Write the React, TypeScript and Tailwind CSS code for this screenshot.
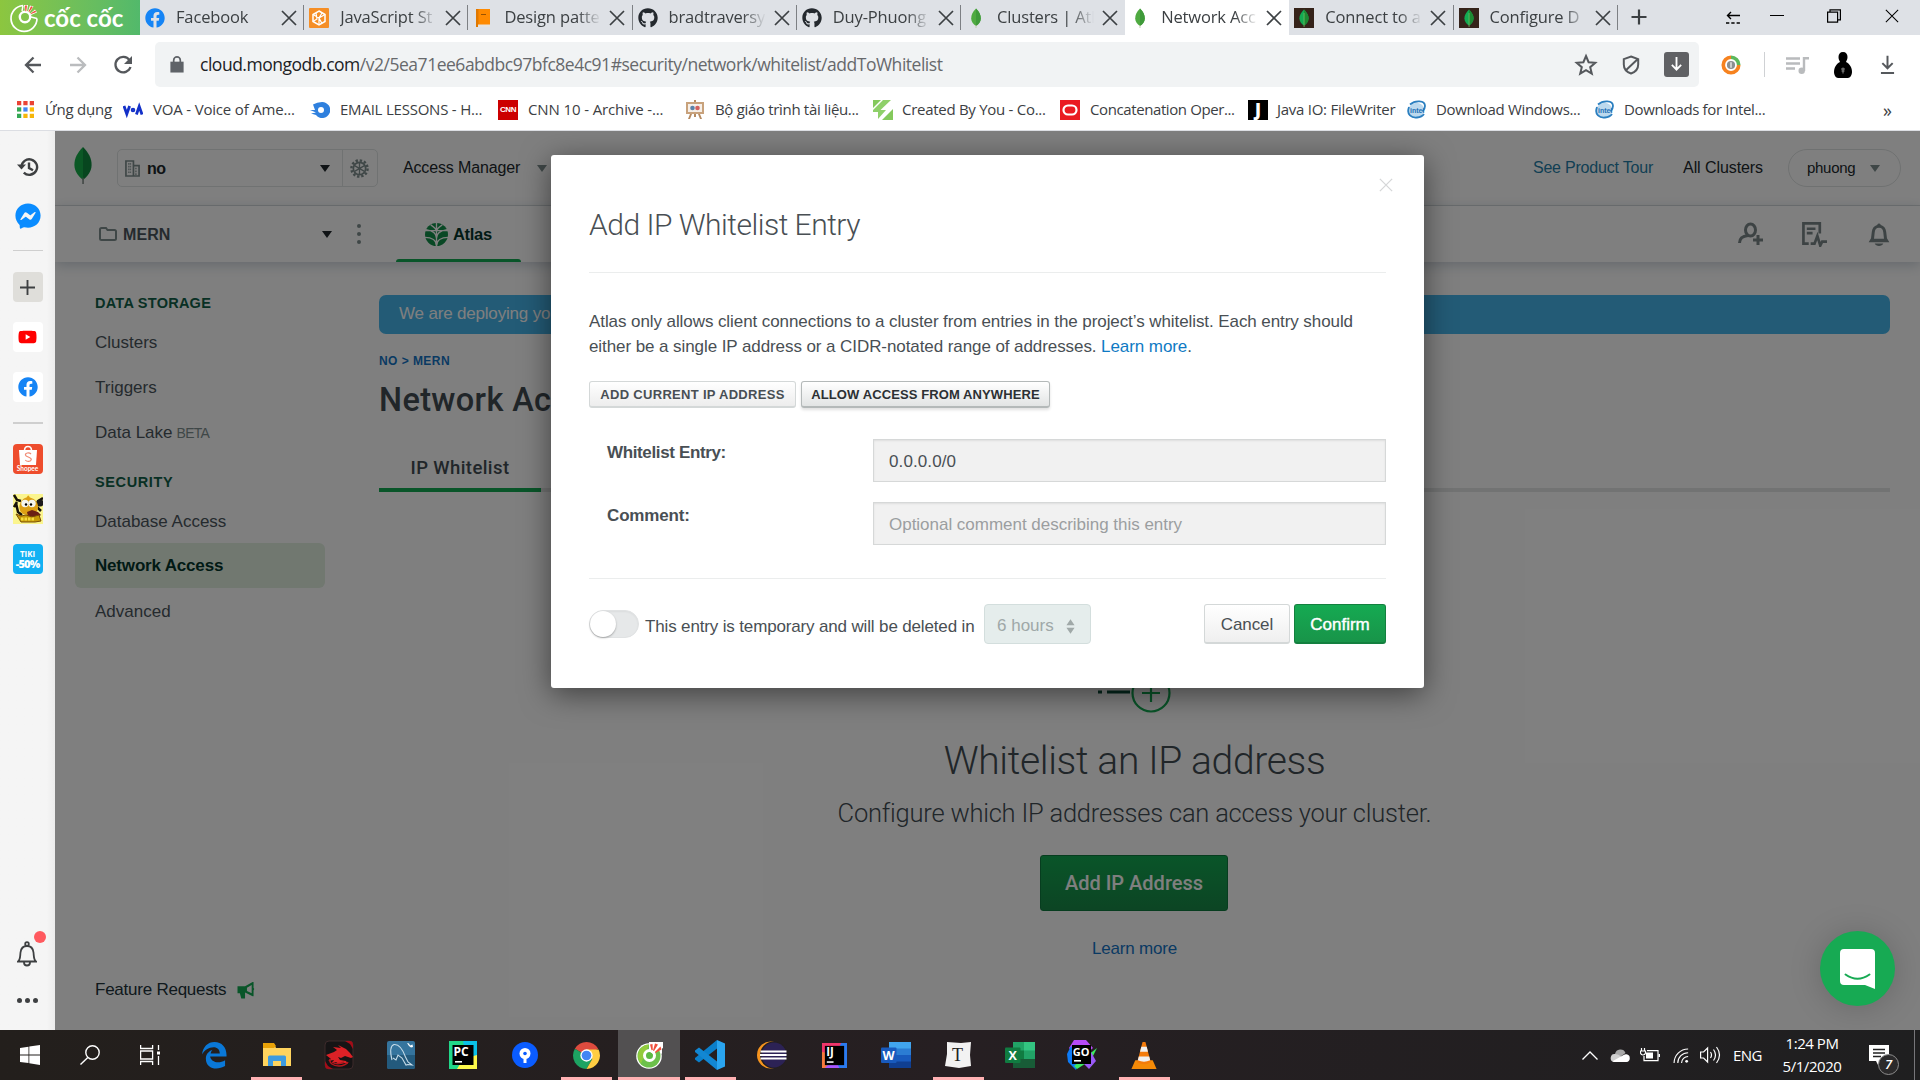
import React from "react";
import { FaGithub, FaFacebook, FaFacebookMessenger, FaYoutube } from "react-icons/fa";

type Kids = { children?: React.ReactNode };

/* ---------- small brand marks ---------- */

const Leaf = ({ className }: { className: string }) => (
  <svg viewBox="0 0 20 36" className={className} preserveAspectRatio="none">
    <path d="M10 0C4 6 1.400 11 1.400 17.500c0 6 4 11 8.600 14.500z" fill="#16b04a" />
    <path d="M10 0c6 6 8.600 11 8.600 17.500 0 6-4 11-8.600 14.500z" fill="#0f8d3f" />
    <path d="M9.300 30h1.500v6H9.300z" fill="#7d8a83" />
  </svg>
);

const TabLeaf = () => (
  <svg viewBox="0 0 20 20" className="h-5 w-5">
    <path d="M10 .5C6.500 4 5.200 7 5.200 10.400c0 3.200 2 5.600 4.800 7.600 2.800-2 4.800-4.400 4.800-7.600C14.800 7 13.500 4 10 .5z" fill="#4faa41" />
    <path d="M10 .5c3.500 3.500 4.800 6.500 4.800 9.900 0 3.200-2 5.600-4.800 7.600z" fill="#3f9a3a" />
    <path d="M9.600 17h.8v3h-.8z" fill="#b8c4a2" />
  </svg>
);

const DarkLeaf = () => (
  <svg viewBox="0 0 20 20" className="h-5 w-5">
    <rect width="20" height="20" fill="#35231a" />
    <path d="M10 1.500C6.600 5 5.400 7.500 5.400 10.400c0 3 2 5.300 4.600 7.100 2.600-1.800 4.600-4.100 4.600-7.100C14.600 7.500 13.400 5 10 1.500z" fill="#13aa52" />
    <path d="M10 1.500c3.400 3.500 4.600 6 4.600 8.900 0 3-2 5.300-4.600 7.100z" fill="#1d8a33" />
    <path d="M9.700 5h.7v14h-.7z" fill="#7ac46a" />
  </svg>
);

const CocOutline = () => (
  <svg viewBox="0 0 30 30" className="h-[30px] w-[30px]" fill="none">
    <path d="M14 2.500A13 13 0 1 0 28 15.500" stroke="#fff" strokeWidth="1.700" />
    <path d="M14 2.500L13 8M28 15.500L22 14" stroke="#fff" strokeWidth="1.400" />
    <circle cx="16" cy="14" r="5.200" stroke="#fff" strokeWidth="2.400" />
    <path d="M15 2h4l-1 6.500-2-.2zM21 2.500l3.500 1-4 6-1.500-1zM26 6.500l2 3-6 2.500-.8-1.500z" fill="#fff" />
    <path d="M16 2.500h2l-.7 5.800h-1zM22 3.300l1.800.7-3.500 5-.8-.6zM26.300 7.500l.9 1.500-5 2-.4-.8z" fill="#f0503c" />
  </svg>
);

const CocColor = () => (
  <svg viewBox="0 0 28 28" className="h-[28px] w-[28px]" fill="none">
    <circle cx="14" cy="15" r="12.800" fill="#fff" />
    <path d="M14 3h13v10z" fill="#fff" />
    <circle cx="14" cy="15" r="11.500" fill="#6cc04a" />
    <path d="M14 3.500a11.500 11.500 0 0 0-8 19z" fill="#93cb3c" />
    <circle cx="14.500" cy="14.500" r="5" stroke="#fff" strokeWidth="3" fill="#5cb944" />
    <path d="M14 1h14v6l-10 6-4-3z" fill="#fff" />
    <path d="M15 3.500l2.500-.5.300 6-1.300.3zM20 2.500l3 1-4 6.500-1-.6zM25.500 5.500l1 3-6 3.500-.6-1z" fill="#f0503c" />
  </svg>
);

/* ---------- browser tabs ---------- */

const tabs: { title: string; icon: React.ReactNode; active?: boolean; sep?: boolean }[] = [
  { title: "Facebook", icon: <FaFacebook className="h-5 w-5 text-[#1584f5]" />, sep: true },
  {
    title: "JavaScript St",
    sep: true,
    icon: (
      <svg viewBox="0 0 20 20" className="h-5 w-5" fill="none">
        <rect width="20" height="20" rx="1" fill="#f58e26" />
        <path d="M10 3l6 3.500v7L10 17l-6-3.500v-7z" stroke="#fff" strokeWidth="1.500" />
        <path d="M4 6.500l6 3.500 3-5M16 6.500L10 10l3 5.500M4 13.500L8 11l-1-6M10 10v7" stroke="#fff" strokeWidth="1.200" />
      </svg>
    ),
  },
  {
    title: "Design patte",
    sep: true,
    icon: (
      <svg viewBox="0 0 20 20" className="h-5 w-5">
        <path d="M3 1h14v16H3z" fill="#ff8a00" />
        <path d="M3 1h2.500v18H3z" fill="#e07800" />
        <path d="M5 16.500h12v2.500H5z" fill="#e8e3dc" />
        <path d="M8 6h5v1H8z" fill="#9a5200" />
      </svg>
    ),
  },
  { title: "bradtraversy", icon: <FaGithub className="h-5 w-5 text-[#24292e]" />, sep: true },
  { title: "Duy-Phuong", icon: <FaGithub className="h-5 w-5 text-[#24292e]" />, sep: true },
  { title: "Clusters | Atl", icon: <TabLeaf /> },
  { title: "Network Acc", icon: <TabLeaf />, active: true },
  { title: "Connect to a", icon: <DarkLeaf />, sep: true },
  { title: "Configure D", icon: <DarkLeaf />, sep: true },
];

const Cross = ({ className }: { className: string }) => (
  <svg viewBox="0 0 16 16" className={className} stroke="currentColor" fill="none">
    <path d="M1 1l14 14M15 1L1 15" />
  </svg>
);

function TabStrip() {
  return (
    <div className="flex h-[35px] bg-[#dee1e6] text-[#3c4043]">
      <div className="flex w-[140px] items-center bg-gradient-to-r from-[#8cc63f] to-[#52b96b] pl-[9px]">
        <CocOutline />
        <span className="ml-[5px] font-['Lato',sans-serif] text-[24px] leading-[28px] font-bold whitespace-nowrap text-white">cốc cốc</span>
      </div>
      {tabs.map((t) => (
        <div
          key={t.title}
          className={
            "flex w-[164.2px] shrink-0 items-center pl-[5px] " + (t.active ? "bg-white" : "")
          }
        >
          <div className="flex w-5 shrink-0">{t.icon}</div>
          <div className="ml-[11px] w-[97px] overflow-hidden [mask-image:linear-gradient(to_right,black_76%,transparent)] text-[16.500px] tracking-[-0.15px] whitespace-nowrap">
            {t.title}
          </div>
          <Cross className="ml-[8px] h-[16px] w-[16px] shrink-0 stroke-[1.700]" />
          <div className={"ml-auto h-[25px] w-px " + (t.sep ? "bg-[#7d8084]" : "")} />
        </div>
      ))}
      <svg viewBox="0 0 16 16" className="mt-[9px] ml-[13px] h-4 w-4" stroke="#3c4043" strokeWidth="2.200"><path d="M8 .5v15M.5 8h15" /></svg>
      <div className="ml-auto flex items-start gap-0 pt-[9px] text-black">
        <svg viewBox="0 0 14 14" className="mt-[2px] mr-[30px] h-[14px] w-[14px]" fill="none" stroke="currentColor" strokeWidth="1.400"><path d="M14 4.500H2M5 1L1.500 4.500 5 8" /><path d="M0 12h14" strokeDasharray="3.300 2" /></svg>
        <svg viewBox="0 0 14 14" className="mr-[43px] h-[14px] w-[14px]" stroke="currentColor"><path d="M0 6.500h14" /></svg>
        <svg viewBox="0 0 14 14" className="mr-[44px] h-[14px] w-[14px]" fill="none" stroke="currentColor" strokeWidth="1.200"><path d="M.6 3.200h10v10H.6zM3 3V.8h10.400v10H11" /></svg>
        <Cross className="mr-[21px] h-[14px] w-[14px] stroke-[1.200]" />
      </div>
    </div>
  );
}

/* ---------- address bar ---------- */

function AddressBar() {
  return (
    <div className="flex h-[60px] items-center bg-white pb-[1px] text-[#5f6368]">
      <svg viewBox="0 0 20 20" className="ml-[23px] h-5 w-5" fill="none" stroke="#55585c" strokeWidth="2.300"><path d="M18 10H4M10.500 2.500L3 10l7.500 7.500" /></svg>
      <svg viewBox="0 0 20 20" className="ml-[25px] h-5 w-5" fill="none" stroke="#babcbe" strokeWidth="2.300"><path d="M2 10h14M9.500 2.500L17 10l-7.500 7.500" /></svg>
      <svg viewBox="0 0 20 20" className="ml-[25px] h-5 w-5" fill="none" stroke="#55585c" strokeWidth="2.300"><path d="M16.500 5.200A7.700 7.700 0 1 0 17.500 12" /><path d="M19 1v8h-8z" fill="#55585c" stroke="none" /></svg>
      <div className="ml-[22px] flex h-[45px] w-[1544px] items-center rounded-[5px] bg-[#f1f3f4] pr-[10px] pl-[15px]">
        <svg viewBox="0 0 14 18" className="h-[17px] w-[14px]"><path d="M0 6h14v11.500H0z" fill="#5f6368" /><path d="M3.500 7V4.500a3.500 3.500 0 0 1 7 0V7" fill="none" stroke="#5f6368" strokeWidth="1.800" /></svg>
        <div className="ml-[16px] text-[17.500px] tracking-[-0.48px] whitespace-nowrap text-[#67696c]">
          <span className="text-[#202124]">cloud.mongodb.com</span>/v2/5ea71ee6abdbc97bfc8e4c91#security/network/whitelist/addToWhitelist
        </div>
        <svg viewBox="0 0 24 24" className="ml-auto h-[24px] w-[24px]" fill="none" stroke="#55585c" strokeWidth="2"><path d="M12 3l2.600 6.200 6.700.6-5.100 4.400 1.600 6.500L12 17.200l-5.800 3.500 1.600-6.500-5.100-4.400 6.700-.6z" /></svg>
        <svg viewBox="0 0 20 22" className="ml-[24px] h-[20px] w-[18px]" fill="none" stroke="#55585c" strokeWidth="2.200"><path d="M10 1.500l8 3v6c0 5-3.500 8.500-8 10-4.500-1.500-8-5-8-10v-6zM17 5L4 17" /></svg>
        <div className="ml-[24px] flex h-[25px] w-[25px] items-center justify-center rounded-[3px] bg-[#606164]">
          <svg viewBox="0 0 14 16" className="h-[15px] w-[13px]" fill="none" stroke="#fff" strokeWidth="2"><path d="M7 0v13M2 8.500l5 5 5-5" /></svg>
        </div>
      </div>
      <svg viewBox="0 0 22 22" className="ml-[22px] h-[20px] w-[20px]" fill="none">
        <path d="M11 2.500A8.500 8.500 0 1 0 19.500 11" stroke="#f6821f" strokeWidth="4" />
        <path d="M11 2.500A8.500 8.500 0 0 1 19.500 11" stroke="#5cb85c" strokeWidth="4" />
        <circle cx="11" cy="11" r="4.500" fill="#8a8f91" /><path d="M11 8v6" stroke="#e7e7e7" strokeWidth="1.600" />
      </svg>
      <div className="ml-[23px] h-[25px] w-px bg-[#cfd1d4]" />
      <svg viewBox="0 0 24 20" className="ml-[21px] h-[20px] w-[24px]" fill="none" stroke="#b9bbbd" strokeWidth="2.400"><path d="M0 3.500h14M0 8.500h14M0 13.500h9" /><path d="M18 16V3.200h5" /><circle cx="15.700" cy="15.700" r="3.200" fill="#b9bbbd" stroke="none" /></svg>
      <svg viewBox="0 0 18 26" className="ml-[24px] h-[26px] w-[18px]"><path d="M9 0c3 0 4.500 2 4.500 5 0 2-.8 3.500-1.500 5 4 2 6 6 6 10 0 3-2 6-4 6H4c-2 0-4-3-4-6 0-4 2-8 6-10-.7-1.500-1.500-3-1.500-5C4.500 2 6 0 9 0z" fill="#000" /><path d="M7 17h4M9 15.500v6M7.500 19h3" stroke="#999" strokeWidth=".9" /></svg>
      <svg viewBox="0 0 16 20" className="ml-[28px] h-[20px] w-[15px]" fill="none" stroke="#55585c" strokeWidth="2.100"><path d="M8 0v13M2.500 8L8 13.500 13.500 8M1 18.500h14" /></svg>
    </div>
  );
}

/* ---------- bookmarks ---------- */

const IntelMark = () => (
  <svg viewBox="0 0 20 20" className="h-5 w-5" fill="none">
    <ellipse cx="9" cy="10.500" rx="8.500" ry="7.500" fill="#bcd9ee" transform="rotate(-25 9 10.500)" />
    <path d="M3 4.500C8 0 18 0 18 6c0 3-1 4-2.500 5.500M2 7c-3 8 3 11 8 10.500 3-.3 6-2 7-3.500" stroke="#2b7fc0" strokeWidth="1.800" />
    <text x="3" y="12.500" fontSize="7" fontWeight="700" fill="#1f70b5" fontFamily="Liberation Sans">intel</text>
  </svg>
);

const bookmarks: { label: string; width: string; text: string; icon: React.ReactNode }[] = [
  {
    label: "Ứng dụng", width: "w-[106px]", text: "pl-px tracking-[-0.2px]",
    icon: (
      <svg viewBox="0 0 18 18" className="h-[17px] w-[17px]">
        <path d="M0 0h4.500v4.500H0zM6.700 0h4.500v4.500H6.700zM13.500 0H18v4.500h-4.500z" fill="#ea4335" />
        <path d="M0 6.700h4.500v4.500H0z" fill="#34a853" /><path d="M6.700 6.700h4.500v4.500H6.700z" fill="#4285f4" />
        <path d="M13.500 6.700H18v4.500h-4.500z" fill="#fbbc04" /><path d="M0 13.500h4.500V18H0z" fill="#34a853" />
        <path d="M6.700 13.500h4.500V18H6.700zM13.500 13.500H18V18h-4.500z" fill="#f6b60a" />
      </svg>
    ),
  },
  {
    label: "VOA - Voice of Ame...", width: "w-[187px]", text: "tracking-[-0.18px]",
    icon: (
      <svg viewBox="0 0 20 20" className="h-5 w-5" fill="none" stroke="#1330c8" strokeWidth="2.800"><path d="M1 6l2.800 8 2.800-8M13.400 14.500l2.800-8 2.800 8" /><circle cx="10" cy="10" r="1.300" strokeWidth="2" /></svg>
    ),
  },
  {
    label: "EMAIL LESSONS - H...", width: "w-[188px]", text: "tracking-[-0.22px]",
    icon: (
      <svg viewBox="0 0 20 20" className="h-5 w-5"><path d="M3 4.500Q7 2 12 2a8 8 0 1 1-6 13l-5-1.500 5-1-6-2.500h5z" fill="#2f80de" /><circle cx="11" cy="10" r="3" fill="#fff" /></svg>
    ),
  },
  {
    label: "CNN 10 - Archive -...", width: "w-[187px]", text: "tracking-[-0.12px]",
    icon: (
      <span className="flex h-5 w-5 items-center justify-center bg-[#cc0000] font-['Liberation_Sans',sans-serif] text-[8px] leading-none font-bold tracking-[-0.5px] text-white">CNN</span>
    ),
  },
  {
    label: "Bộ giáo trình tài liệu...", width: "w-[188px]", text: "tracking-[-0.32px]",
    icon: (
      <svg viewBox="0 0 20 20" className="h-5 w-5"><path d="M1 2h18v12H1z" fill="#c8a27c" /><path d="M3 4h14v8H3z" fill="#f6efe8" /><circle cx="7.500" cy="8" r="2.300" fill="#5b82a8" /><circle cx="12.500" cy="8" r="2.300" fill="#d2605e" /><path d="M5 14h2l-2 5H3zM13 14h2l2 5h-2zM9 0h2v2H9zM9 14h2v3H9z" fill="#b58a61" /></svg>
    ),
  },
  {
    label: "Created By You - Co...", width: "w-[187px]", text: "-ml-px tracking-[-0.28px]",
    icon: (
      <svg viewBox="0 0 20 20" className="h-5 w-5"><path d="M0 0h8L0 8z" fill="#84c95c" /><path d="M0 10L10 0h8L7.500 10H13L5 19V12H0z" fill="#8fd06a" /><path d="M20 9v11H9z" fill="#84c95c" /></svg>
    ),
  },
  {
    label: "Concatenation Oper...", width: "w-[188px]", text: "tracking-[-0.4px]",
    icon: (
      <svg viewBox="0 0 20 20" className="h-5 w-5"><rect width="20" height="20" fill="#ea1b22" /><rect x="3.500" y="5.500" width="13" height="9" rx="4.500" fill="none" stroke="#fff" strokeWidth="2.200" /></svg>
    ),
  },
  {
    label: "Java IO: FileWriter", width: "w-[159px]", text: "-ml-px tracking-[-0.26px]",
    icon: (
      <span className="flex h-5 w-5 items-center justify-center bg-black font-['Open_Sans',sans-serif] text-[17px] leading-none font-extrabold text-white">J</span>
    ),
  },
  { label: "Download Windows...", width: "w-[188px]", text: "-ml-px tracking-[-0.33px]", icon: <IntelMark /> },
  { label: "Downloads for Intel...", width: "w-[187px]", text: "-ml-px tracking-[-0.35px]", icon: <IntelMark /> },
];

function Bookmarks() {
  return (
    <div className="flex h-[36px] items-center border-b border-[#dcdee3] bg-white pb-[6px] pl-[17px] text-[15px] text-[#3c4043]">
      {bookmarks.map((b) => (
        <div key={b.label} className={"flex shrink-0 items-center gap-[10px] whitespace-nowrap " + b.width}>
          {b.icon}
          <span className={b.text}>{b.label}</span>
        </div>
      ))}
      <span className="ml-[101px] text-[18px] leading-none">»</span>
    </div>
  );
}

/* ---------- browser side rail ---------- */

const RailBox = ({ children, className = "" }: Kids & { className?: string }) => (
  <div className={"flex h-[30px] w-[30px] items-center justify-center rounded-[4px] " + className}>{children}</div>
);

function SideRail() {
  return (
    <div className="flex w-[55px] shrink-0 flex-col items-center bg-gradient-to-r from-[#f5f5f5] from-85% to-[#ececec]">
      <svg viewBox="0 0 22 20" className="mt-[26px] h-[20px] w-[22px]" fill="none" stroke="#3e4042" strokeWidth="2.400">
        <path d="M4.500 10a7.800 7.800 0 1 1 2.300 5.600" /><path d="M0 7.500l4.500 5 4.500-5" fill="#3e4042" stroke="none" /><path d="M12 5.500V11l4 2.300" />
      </svg>
      <FaFacebookMessenger className="mt-[26px] h-[26px] w-[26px] text-[#0a8cff]" />
      <div className="mt-[21px] h-px w-[30px] bg-[#cfcfcf]" />
      <RailBox className="mt-[21px] bg-[#dfdeda]">
        <svg viewBox="0 0 16 16" className="h-[15px] w-[15px]" stroke="#3e4042" strokeWidth="2"><path d="M8 0v16M0 8h16" /></svg>
      </RailBox>
      <RailBox className="mt-[20px] bg-white"><FaYoutube className="h-[20px] w-[19px] text-[#ff0000]" /></RailBox>
      <RailBox className="mt-[20px] bg-white"><FaFacebook className="h-5 w-5 text-[#1584f5]" /></RailBox>
      <div className="mt-[20px] h-[2px] w-[30px] bg-[#cfcfcf]" />
      <RailBox className="mt-[20px] flex-col bg-[#ee4d2d]">
        <svg viewBox="0 0 20 20" className="h-[20px] w-[20px]"><path d="M1 5h18l-1 15H2z" fill="#fff" /><path d="M6.500 5.500C6.500 0 13.500 0 13.500 5.500" fill="none" stroke="#fff" strokeWidth="1.500" /><path d="M13 9c-2-2-6-1-5.500 1.200.5 2 6 1.700 5.800 4.300-.3 2.500-4.500 2.500-6 .5" fill="none" stroke="#f08a74" strokeWidth="1.200" /></svg>
        <span className="font-['Lato',sans-serif] text-[6.500px] leading-[8px] font-bold text-white">Shopee</span>
      </RailBox>
      <RailBox className="mt-[20px] overflow-hidden rounded-none bg-[#fbf58e]">
        <svg viewBox="0 0 30 30" className="h-[30px] w-[30px]">
          <path d="M1 1l3 5 4 1M1 13l3-5M3 9l2 9 4 3M30 4l-5 3-2 5 5 5" fill="none" stroke="#17120a" strokeWidth="2.500" />
          <circle cx="27" cy="9" r="3.500" fill="#1d1a1a" />
          <path d="M15 1.500c1.500 0 1 1.500 2 2 6 1.500 8.500 6 8 10.500-.5 4-4 7-9 7s-9-2-9.500-6.500S9 4.500 13.500 3.500z" fill="#dda014" />
          <circle cx="12" cy="9.500" r="3.700" fill="#f5f5ee" /><circle cx="19" cy="9.500" r="3.700" fill="#f5f5ee" /><circle cx="13" cy="10.500" r="1.200" /><circle cx="18" cy="10.500" r="1.200" />
          <path d="M14 18l5-2 6 2 3 3-5 3-8-2z" fill="#6b2014" /><path d="M3 20l5 2 5-1 6 2 7-2 2 6-6 1H8z" fill="#c79b08" stroke="#7a4e05" /><path d="M8 25h14" stroke="#f5dc3c" strokeWidth="3" strokeDasharray="2.500 1" />
        </svg>
      </RailBox>
      <RailBox className="mt-[20px] flex-col bg-[#12b1f3] font-['Open_Sans',sans-serif] font-bold text-white">
        <span className="text-[8px] leading-[10px]">TIKI</span>
        <span className="text-[11px] leading-[10px] font-extrabold tracking-[-0.8px]">-50%</span>
      </RailBox>
      <div className="relative mt-auto mb-[31px] -ml-px">
        <svg viewBox="0 0 20 26" className="h-[26px] w-[20px]" fill="none" stroke="#3e4042" strokeWidth="1.800">
          <path d="M1 20.500c2.500-2 2-5 2.500-9C4 7 6 5 10 5s6 2 6.500 6.500c.5 4 0 7 2.500 9zM7 21.500c0 4 6 4 6 0" /><circle cx="10" cy="3" r="1.800" />
        </svg>
        <div className="absolute -top-[10px] left-[17px] h-[12px] w-[12px] rounded-full bg-[#ff5a5f]" />
      </div>
      <div className="mb-[27px] flex gap-[3px]">
        <i className="h-[5px] w-[5px] rounded-full bg-[#3e4042]" /><i className="h-[5px] w-[5px] rounded-full bg-[#3e4042]" /><i className="h-[5px] w-[5px] rounded-full bg-[#3e4042]" />
      </div>
    </div>
  );
}

/* ---------- Atlas page ---------- */

const Caret = ({ className }: { className: string }) => (
  <svg viewBox="0 0 10 7" className={"h-[7px] w-[10px] " + className}><path d="M0 0h10L5 7z" fill="currentColor" /></svg>
);

function AtlasHeader() {
  return (
    <>
      <div className="flex h-[75px] items-center border-b border-[#dcdfe1] bg-white text-[16px] whitespace-nowrap text-[#20282c]">
        <Leaf className="mb-[5px] ml-[18px] h-[37px] w-[20px]" />
        <div className="ml-[24px] flex h-[38px] w-[261px] items-center rounded-[5px] border border-[#e0e4e4]">
          <svg viewBox="0 0 16 18" className="ml-[7px] h-[17px] w-[15px]" fill="none" stroke="#7f8f8f" strokeWidth="1.800"><path d="M1 17V1h8v16zM9 6h6v11H9" /><path d="M3.500 4h3M3.500 7h3M3.500 10h3M3.500 13h3M11 9h2M11 12h2M11 15h2" strokeDasharray="1.300 .8" /></svg>
          <span className="mt-[2px] ml-[7px] text-[16px] font-bold tracking-[-0.6px]">no</span>
          <Caret className="ml-auto text-[#20282c]" />
          <div className="ml-[12px] h-full w-px bg-[#e0e4e4]" />
          <svg viewBox="0 0 20 20" className="mr-[8px] ml-[7px] h-[19px] w-[19px]" fill="none" stroke="#7f8f8f"><circle cx="10" cy="10" r="8.500" strokeWidth="2.600" strokeDasharray="2.500 1.950" /><circle cx="10" cy="10" r="6.500" strokeWidth="1.800" /><path d="M10 4v12M4.800 7l10.400 6M4.800 13l10.400-6" strokeWidth="1.400" /></svg>
        </div>
        <span className="ml-[25px] tracking-[-0.15px]">Access Manager</span>
        <Caret className="ml-[17px] text-[#7f8f8f]" />
        <span className="ml-auto tracking-[-0.2px] text-[#247fa8]">See Product Tour</span>
        <span className="ml-[30px] tracking-[-0.08px]">All Clusters</span>
        <div className="mr-[19px] ml-[25px] flex h-[38px] w-[113px] items-center rounded-full border border-[#dfe3e3] pl-[18px] text-[15px] tracking-[-0.3px]">
          phuong<Caret className="ml-[15px] text-[#7f8f8f]" />
        </div>
      </div>
      <div className="relative flex h-[56px] items-center bg-white shadow-[0_3px_12px_rgba(60,90,120,0.28)]">
        <svg viewBox="0 0 18 14" className="ml-[44px] h-[14px] w-[18px]" fill="none" stroke="#7f8f8f" strokeWidth="2"><path d="M1 12V2.500Q1 1 2.500 1H7l1.500 2h7Q17 3 17 4.500v7q0 1.500-1.500 1.500H2.500Q1 13 1 11.500z" /></svg>
        <span className="mt-[2px] ml-[6px] w-[49px] text-[16px] font-bold tracking-[0.1px] text-[#4a555c]">MERN</span>
        <Caret className="ml-[150px] text-[#20282c]" />
        <div className="ml-[25px] flex flex-col gap-[4px]">
          <i className="h-[4px] w-[4px] rounded-full bg-[#7f8f8f]" /><i className="h-[4px] w-[4px] rounded-full bg-[#7f8f8f]" /><i className="h-[4px] w-[4px] rounded-full bg-[#7f8f8f]" />
        </div>
        <div className="relative ml-[35px] flex h-full w-[125px] items-center pl-[29px]">
          <svg viewBox="0 0 24 24" className="h-[23px] w-[23px]"><circle cx="12" cy="12" r="12" fill="#13904a" /><path d="M0 8h24M12 24c0-6-5-9-12-9M12 24c0-6 5-9 12-9M12 16c0-5-4-8-11-9M12 16c0-5 4-8 11-9M12 9c0-3-3-5-6-7M12 9c0-3 3-5 6-7M12 0v24" fill="none" stroke="#fff" strokeWidth="1.400" /></svg>
          <span className="ml-[5px] text-[16.500px] font-bold tracking-[-0.3px] text-[#02352a]">Atlas</span>
          <div className="absolute inset-x-0 bottom-0 h-[3px] rounded-t bg-[#13aa52]" />
        </div>
        <div className="mr-[30px] ml-auto flex items-center text-[#7a8788]">
          <svg viewBox="0 0 26 24" className="h-[24px] w-[26px]" fill="none" stroke="currentColor" strokeWidth="3"><ellipse cx="12.500" cy="8" rx="5" ry="6" /><path d="M1.500 21c0-5 3.500-7 8.500-7.500M20 13v10M15 18h10" /></svg>
          <svg viewBox="0 0 26 26" className="ml-[38px] h-[25px] w-[25px]" fill="none" stroke="currentColor" strokeWidth="2.800"><path d="M7 22.500H1.500v-21h17V12M5 7h9M5 11.500h6" /><path d="M9 22.500h4l3-8 3 10 2-4h5" /></svg>
          <svg viewBox="0 0 22 24" className="ml-[41px] h-[23px] w-[22px]"><path d="M9 2q2-3 4 0c3 1 5 3 5.500 7l.8 7 2.500 4H.2l2.500-4 .8-7C4 5 6 3 9 2zm2 3C8 5 6.800 7 6.500 10l-.7 6.500h10.400L15.500 10c-.3-3-1.500-5-4.500-5zM6.500 21.500h9c-1 3.300-8 3.300-9 0z" fill="currentColor" fillRule="evenodd" /></svg>
        </div>
      </div>
    </>
  );
}

const NavItem = ({ children, active }: Kids & { active?: boolean }) => (
  <div
    className={
      "flex h-[45px] w-[250px] items-center rounded-[6px] pl-[20px] " +
      (active ? "bg-[#e3f0e1] pt-px font-bold tracking-[-0.18px] text-[#02352a]" : "text-[#4a555c]")
    }
  >
    {children}
  </div>
);

function AtlasNav() {
  return (
    <div className="flex w-[324px] shrink-0 flex-col pl-[20px] text-[17px] text-[#4a555c]">
      <div className="mt-[32px] flex h-[20px] items-center pl-[20px] text-[14.500px] font-bold tracking-[0.25px] text-[#116149]">DATA STORAGE</div>
      <div className="mt-[6px]">
        <NavItem>Clusters</NavItem>
        <NavItem>Triggers</NavItem>
        <NavItem>Data Lake<span className="ml-[4px] pt-[2px] text-[14px] tracking-[-0.7px] text-[#7f8f8f]">BETA</span></NavItem>
      </div>
      <div className="mt-[18px] flex h-[20px] items-center pl-[20px] text-[14.500px] font-bold tracking-[0.62px] text-[#116149]">SECURITY</div>
      <div className="mt-[5px]">
        <div className="pt-px">
          <NavItem>Database Access</NavItem>
        </div>
        <div className="-mt-px">
          <NavItem active>Network Access</NavItem>
        </div>
        <div className="pt-px">
          <NavItem>Advanced</NavItem>
        </div>
      </div>
      <div className="mt-auto mb-[29px] flex items-center pl-[20px] leading-[22px] tracking-[-0.24px] text-[#20323a]">
        Feature Requests
        <svg viewBox="0 0 18 18" className="ml-[11px] h-[17px] w-[18px]"><path d="M0 4.500h8L16 0h1v6q1.500 1 0 3v6h-1l-8-4v6.500H4L2.500 12H0zM10 6v3.500l5 2.500V3.200z" fill="#13aa52" fillRule="evenodd" /></svg>
      </div>
    </div>
  );
}

function AtlasContent() {
  return (
    <div className="mr-[30px] flex flex-1 flex-col">
      <div className="mt-[33px] flex h-[39px] items-center rounded-[7px] bg-[#46b6ec] pb-[2px] pl-[20px] text-[17px] tracking-[-0.18px] text-white">
        We are deploying your changes
      </div>
      <div className="mt-[17px] text-[12px] leading-[20px] font-bold tracking-[0.45px] text-[#1474c6]">NO &gt; MERN</div>
      <div className="mt-[9px] font-['Roboto',sans-serif] text-[32.500px] leading-[40px] font-medium tracking-[0.35px] text-[#424c53]">Network Access</div>
      <div className="flex h-[72px] items-end">
        <div className="flex h-[47px] w-[162px] items-start justify-center border-b-[4px] border-[#13aa52] pt-[11px] font-['Roboto',sans-serif] text-[18.500px] leading-[24px] font-medium tracking-[0.4px] text-[#424c53]">IP Whitelist</div>
        <div className="h-[4px] flex-1 bg-[#e4e7e7]" />
      </div>
      <div className="flex flex-col items-center text-[#424c53]">
        <svg viewBox="0 0 110 140" className="mt-[81px] mr-[3px] h-[140px] w-[110px]" fill="none" strokeWidth="3">
          <path d="M20 4h60v90M20 4v100" stroke="#0b4f3b" />
          <path d="M20 119h4M29 119h23" stroke="#0b4f3b" />
          <circle cx="73" cy="120" r="18.500" fill="#fff" stroke="#13aa52" strokeWidth="2.200" />
          <path d="M73 111v18M64 120h18" stroke="#13aa52" strokeWidth="2.200" />
        </svg>
        <div className="mt-[22px] font-['Roboto',sans-serif] text-[39px] leading-[52px] font-light tracking-[-0.35px] whitespace-nowrap">Whitelist an IP address</div>
        <div className="mt-[8px] font-['Roboto',sans-serif] text-[25.500px] leading-[36px] font-light tracking-[-0.22px] whitespace-nowrap">Configure which IP addresses can access your cluster.</div>
        <div className="mt-[24px] mr-[1px] flex h-[56px] w-[188px] items-center justify-center rounded-[3px] border border-[#0f7a3e] bg-gradient-to-b from-[#13aa52] to-[#188a48] font-['Roboto',sans-serif] text-[20px] font-medium tracking-[0px] text-white">Add IP Address</div>
        <div className="mt-[26px] text-[17px] leading-[24px] tracking-[-0.2px] text-[#1474c6]">Learn more</div>
      </div>
    </div>
  );
}

/* ---------- whitelist dialog ---------- */

const SmallButton = ({ children, className }: Kids & { className: string }) => (
  <div className={"flex h-[27px] items-center justify-center rounded-[3px] border border-b-2 bg-gradient-to-b from-white pt-px text-[13px] font-bold whitespace-nowrap " + className}>
    {children}
  </div>
);

function WhitelistDialog() {
  return (
    <div className="absolute top-[24px] left-[496px] flex h-[533px] w-[873px] flex-col rounded-[3px] bg-white px-[38px] text-[17px] text-[#494f54] shadow-[0_6px_30px_rgba(0,0,0,0.5)]">
      <Cross className="mt-[23px] -mr-[7px] h-[14px] w-[14px] self-end stroke-[1.500] text-[#d5d7d8]" />
      <div className="mt-[13px] font-['Roboto',sans-serif] text-[30px] leading-[40px] font-light tracking-[-0.5px]">Add IP Whitelist Entry</div>
      <div className="mt-[27px] h-px bg-[#ebeded]" />
      <p className="mt-[36px] leading-[25px] tracking-[-0.08px] whitespace-nowrap">
        Atlas only allows client connections to a cluster from entries in the project’s whitelist. Each entry should
        <br />
        either be a single IP address or a CIDR-notated range of addresses. <span className="text-[#0f7ac4]">Learn more</span>.
      </p>
      <div className="mt-[22px] flex gap-[5px]">
        <SmallButton className="w-[207px] border-[#d4d8d8] to-[#ededed] tracking-[0.3px]">ADD CURRENT IP ADDRESS</SmallButton>
        <SmallButton className="w-[249px] border-[#b4b9b9] to-[#e2e4e4] tracking-[0.1px] text-[#2c3033] shadow-[0_2px_3px_rgba(0,0,0,0.12)]">ALLOW ACCESS FROM ANYWHERE</SmallButton>
      </div>
      <div className="mt-[31px] flex justify-between pl-[18px]">
        <span className="mt-[2px] leading-[24px] font-bold tracking-[-0.36px]">Whitelist Entry:</span>
        <div className="flex h-[43px] w-[513px] items-center border border-[#d6d8d8] bg-[#f1f1f1] pt-[2px] pl-[15px] tracking-[0.1px] shadow-[inset_0_1px_2px_rgba(0,0,0,0.08)]">0.0.0.0/0</div>
      </div>
      <div className="mt-[20px] flex justify-between pl-[18px]">
        <span className="mt-[2px] leading-[24px] font-bold tracking-[-0.15px]">Comment:</span>
        <div className="flex h-[43px] w-[513px] items-center border border-[#d6d8d8] bg-[#f1f1f1] pt-[2px] pl-[15px] tracking-[-0.02px] text-[#9b9ea0] shadow-[inset_0_1px_2px_rgba(0,0,0,0.08)]">Optional comment describing this entry</div>
      </div>
      <div className="mt-[33px] h-px bg-[#ebeded]" />
      <div className="mt-[25px] flex items-center">
        <div className="flex h-[28px] w-[50px] items-center rounded-full border border-[#e0e2e3] bg-[#e6e8e9] shadow-[inset_0_1px_2px_rgba(0,0,0,0.05)]">
          <div className="h-[26px] w-[26px] rounded-full bg-white shadow-[0_1px_2px_rgba(0,0,0,0.3)]" />
        </div>
        <span className="mt-[5px] ml-[6px] w-[339px] tracking-[-0.15px] whitespace-nowrap">This entry is temporary and will be deleted in</span>
        <div className="flex h-[40px] w-[107px] items-center rounded-[4px] border border-[#d3dedd] bg-[#e5edec] pt-[4px] pl-[12px] text-[#9fa8a8]">
          6 hours
          <svg viewBox="0 0 10 16" className="ml-[12px] h-[15px] w-[9px]"><path d="M5 0l4.500 6.500H.5zM5 16L.5 9.500h9z" fill="#a0a9a8" /></svg>
        </div>
        <div className="ml-auto flex h-[40px] w-[86px] items-center justify-center rounded-[3px] border border-b-2 border-[#d4d8d8] bg-gradient-to-b from-white to-[#efefef] pt-[2px] tracking-[-0.1px]">Cancel</div>
        <div className="ml-[4px] flex h-[40px] w-[92px] items-center justify-center rounded-[3px] border border-b-2 border-[#13803f] bg-gradient-to-b from-[#15aa52] to-[#189449] pt-[2px] tracking-[0px] text-white [-webkit-text-stroke:0.4px_white]">Confirm</div>
      </div>
    </div>
  );
}

function AtlasPage() {
  return (
    <div className="relative flex flex-1 flex-col overflow-hidden bg-white font-['Liberation_Sans',Arial,sans-serif]">
      <AtlasHeader />
      <div className="flex flex-1">
        <AtlasNav />
        <AtlasContent />
      </div>
      <div className="absolute inset-0 bg-black/50" />
      <WhitelistDialog />
      <div className="absolute right-[25px] bottom-[24px] flex h-[75px] w-[75px] items-center justify-center rounded-full bg-[#17aa53] shadow-[0_2px_32px_rgba(0,0,0,0.18)]">
        <svg viewBox="0 0 35 40" className="h-[40px] w-[35px]"><path d="M4 0h27q4 0 4 4v36l-10-4H4q-4 0-4-4V4q0-4 4-4z" fill="#fff" /><path d="M5.500 25.500Q17.500 34 29.500 25.500" fill="none" stroke="#17aa53" strokeWidth="2" strokeLinecap="round" /></svg>
      </div>
    </div>
  );
}

/* ---------- Windows taskbar ---------- */

const jetText = { fontFamily: "Open Sans", fontWeight: 700, fill: "#fff" };

const apps: { name: string; bar?: boolean; active?: boolean; icon: React.ReactNode }[] = [
  { name: "edge", icon: <svg viewBox="0 0 26 28" className="h-[27px] w-[25px]"><path d="M0 13C1 5 6 0 13 0c8 0 13 6 12.500 15H8.500c.5 5 8 8.500 15.500 4v6c-9 5-20 2.500-20-8C4 12 8 9 11 8c-1 1-1.800 2.500-2 4h9.500c0-4-2.500-6.500-6.500-6.500C7 5.500 2.500 8.500 0 13z" fill="#0a78d7" /></svg> },
  { name: "files", bar: true, icon: <svg viewBox="0 0 28 24" className="h-[24px] w-[28px]"><path d="M0 1h11l2 4h15v18H0z" fill="#ffd45e" /><path d="M0 0h11l2 3-2 2H0z" fill="#e8a208" /><path d="M5 23v-9q0-1.500 1.500-1.500h15Q23 12.500 23 14v9h-5v-5h-8v5z" fill="#3d9be0" /></svg> },
  { name: "dragon", icon: <svg viewBox="0 0 30 30" className="h-[30px] w-[30px]"><rect x="1" y="1" width="28" height="28" rx="4" fill="#161415" stroke="#3d2a2b" /><path d="M21 1h5q3 0 3 4v4l-3-5zM9 29H4q-3 0-3-4v-4l3 5z" fill="#a30d18" /><path d="M2 15l8-3 3-2-4-3 8 1-3-3 8 4 4 4 3 4-2 1-6-2-4 2-3-1 2 3 6 1 2 3-3-1-6 1-3-2-4 1 2-3-6 1 3-2z" fill="#dc2126" /><path d="M6 19c-1 4 3 7 9 7 4 0 8-2 9-4M8 22c3 2 8 2 12 0" stroke="#b5171d" strokeWidth="1.500" fill="none" /></svg> },
  { name: "mysql", icon: <svg viewBox="0 0 28 28" className="h-[28px] w-[28px]"><rect width="28" height="28" rx="2" fill="#35749d" /><path d="M0 14h28v12q0 2-2 2H2q-2 0-2-2z" fill="#235a7d" /><path d="M5 19C3 11 3 5 7 3.500c5-.5 9 5.500 11.500 12.500l2.500 5 4 3-4-.5-2 .5-4-7-4-3-2 5-3-2" fill="none" stroke="#c5dbe8" strokeWidth="1.100" /><path d="M20 2l2 .5 1 2 2.500-1L26 6l-2 .5-2-1.500z" fill="#fff" /></svg> },
  { name: "pycharm", icon: <svg viewBox="0 0 28 28" className="h-[28px] w-[28px]"><path d="M0 0h18l-8 28H0z" fill="#21d789" /><path d="M14 0h14v18l-12-8z" fill="#0ac1e8" /><path d="M28 14v14H8l6-10z" fill="#fcf84a" /><rect x="3.500" y="4" width="21" height="20" fill="#000" /><text x="4.500" y="15" fontSize="12" style={jetText}>PC</text><path d="M6 20h7v1.600H6z" fill="#fff" /></svg> },
  { name: "key", icon: <svg viewBox="0 0 26 26" className="h-[26px] w-[26px]"><circle cx="13" cy="13" r="13" fill="#0a5cff" /><circle cx="13" cy="11.500" r="5.500" fill="#fff" /><circle cx="13" cy="11.500" r="1.800" fill="#0a5cff" /><path d="M11.500 15h3v6h-3z" fill="#fff" /></svg> },
  { name: "chrome", bar: true, icon: <svg viewBox="0 0 28 28" className="h-[27px] w-[27px]"><path d="M14 14L1.900 7a14 14 0 0 1 24.200 0z" fill="#dd4b3e" /><path d="M14 14L1.900 7A14 14 0 0 0 14 28l6-10.500z" fill="#1da362" /><path d="M14 7.700h12.500A14 14 0 0 1 14 28l6-10.500z" fill="#ffcd42" /><circle cx="14" cy="14" r="6.400" fill="#fff" /><circle cx="14" cy="14" r="5" fill="#4285f4" /></svg> },
  { name: "coccoc", active: true, icon: <CocColor /> },
  { name: "vscode", bar: true, icon: <svg viewBox="0 0 30 30" className="h-[30px] w-[30px]"><path d="M22 0v8.500L4 22.500 0 19.500v-1.500z" fill="#0a7fcb" /><path d="M0 10.500L4 7.500l18 14V30L0 12z" fill="#1287d3" /><path d="M22 0l8 3.500v23L22 30z" fill="#2aa5f0" /></svg> },
  { name: "eclipse", icon: <svg viewBox="0 0 30 28" className="h-[28px] w-[30px]"><circle cx="13.500" cy="14" r="13.500" fill="#f7941e" /><circle cx="16.500" cy="14" r="13.500" fill="#241f22" /><circle cx="17" cy="14" r="12.500" fill="#2c2255" /><path d="M3.500 10.500h26M3 14h26.500M3.500 17.500h26" stroke="#fff" strokeWidth="1.800" /></svg> },
  { name: "intellij", icon: <svg viewBox="0 0 26 26" className="h-[25px] w-[25px]"><rect width="26" height="26" fill="#2b7bf0" /><path d="M0 0h20l-7 13L0 22z" fill="#f0356b" /><path d="M0 9l13 4-9 13H0z" fill="#f97a3d" /><path d="M3 26l10-10 5 10z" fill="#a857ff" /><rect x="3" y="3" width="20" height="20" fill="#000" /><text x="4.500" y="14" fontSize="12" style={jetText}>IJ</text><path d="M5 19h7v1.600H5z" fill="#fff" /></svg> },
  { name: "word", icon: <svg viewBox="0 0 30 26" className="h-[26px] w-[30px]"><path d="M8 0h22v7H8z" fill="#41a5ee" /><path d="M8 6.500h22v7H8z" fill="#2b7cd3" /><path d="M8 13h22v7H8z" fill="#185abd" /><path d="M8 19.500h22V26H8z" fill="#103f91" /><rect y="5.500" width="15.500" height="15.500" rx="1" fill="#185abd" /><text x="1.600" y="17.500" fontSize="12.500" style={jetText}>W</text></svg> },
  { name: "typora", bar: true, icon: <svg viewBox="0 0 28 28" className="h-[28px] w-[28px]"><path d="M3 1l14 1 10-1-1 13 1 11-12 2-14-2 2-12z" fill="#f2f2f2" /><text x="8" y="20" fontSize="18" fontFamily="Liberation Serif" fill="#222">T</text></svg> },
  { name: "excel", icon: <svg viewBox="0 0 30 26" className="h-[26px] w-[30px]"><path d="M8 0h11v9H8z" fill="#21a366" /><path d="M19 0h11v9H19z" fill="#33c481" /><path d="M8 8.500h11v9H8z" fill="#107c41" /><path d="M19 8.500h11v9H19z" fill="#21a366" /><path d="M8 17h22v9H8z" fill="#185c37" /><rect y="5.500" width="15.500" height="15.500" rx="1" fill="#107c41" /><text x="3.400" y="17.500" fontSize="12.500" style={jetText}>X</text></svg> },
  { name: "goland", icon: <svg viewBox="0 0 30 30" className="h-[30px] w-[30px]"><path d="M7 0h12l7 8-14 12L2 8z" fill="#b74af7" /><path d="M0 14l4-8 8 16-3 8-8-8z" fill="#0d7bf7" /><path d="M30 8l-6 12-14 9-3-3z" fill="#3bea62" /><path d="M24 12l5 9-7 8-6-6z" fill="#9a59f7" /><rect x="5" y="5" width="19" height="19" fill="#000" /><text x="5.700" y="15.500" fontSize="11" style={jetText}>GO</text><path d="M7 20h7v1.600H7z" fill="#fff" /></svg> },
  { name: "vlc", bar: true, icon: <svg viewBox="0 0 26 30" className="h-[29px] w-[26px]"><path d="M4 20h18l4 9H0z" fill="#f58a07" /><path d="M11.500 1h3L20 22q-7 4-14 0z" fill="#f47b0a" /><path d="M10.200 6h5.600l1.300 5H8.900zM7.600 16h10.800l1 4q-6.400 3-12.800 0z" fill="#f0f0f0" /></svg> },
];

function Taskbar() {
  return (
    <div className="flex h-[50px] bg-gradient-to-r from-[#231f1c] via-[#261f22] to-[#1f1f20] font-['Open_Sans','Noto_Sans',sans-serif] text-white">
      <div className="flex w-[60px] items-center justify-center">
        <svg viewBox="0 0 20 20" className="h-5 w-5"><path d="M0 3l8.500-1.200V9.500H0zM9.300 1.600L20 0v9.500H9.300zM0 10.400h8.500v7.700L0 17zM9.300 10.400H20V20L9.300 18.300z" fill="#fff" /></svg>
      </div>
      <div className="flex w-[60px] items-center justify-center">
        <svg viewBox="0 0 20 20" className="h-5 w-5" fill="none" stroke="#fff" strokeWidth="1.400"><circle cx="12.500" cy="7.500" r="6.700" /><path d="M7.800 12.500L.5 19.500" /></svg>
      </div>
      <div className="flex w-[64px] items-center justify-center pr-[4px]">
        <svg viewBox="0 0 20 20" className="h-5 w-5" fill="none" stroke="#fff" strokeWidth="1.300"><path d="M.6 0v3.500h12V0M.6 20v-3.500h12V20M.6 6h12v8H.6zM18.500 0v5M18.500 11v9" /><path d="M17 6.500h3v3h-3z" fill="#fff" stroke="none" /></svg>
      </div>
      {apps.map((a) => (
        <div key={a.name} className={"relative flex w-[61.950px] shrink-0 items-center justify-center " + (a.active ? "bg-[#525051]" : "")}>
          {a.icon}
          {a.bar && <div className="absolute bottom-0 h-[3px] w-[51px] bg-[#ffb1b3]" />}
          {a.active && <div className="absolute inset-x-0 bottom-0 h-[3px] bg-[#ffb1b3]" />}
        </div>
      ))}
      <div className="ml-auto flex items-center">
        <svg viewBox="0 0 16 9" className="h-[9px] w-[16px]" fill="none" stroke="#fff" strokeWidth="1.300"><path d="M.5 8.500L8 1l7.500 7.500" /></svg>
        <svg viewBox="0 0 20 13" className="ml-[12px] h-[13px] w-[20px]"><path d="M5 5a5.500 5.500 0 0 1 10.500-1L10 8z" fill="#a9a9a9" /><path d="M4 13a4 4 0 0 1 1.500-8q3 0 6 3l5 5z" fill="#d0d0d0" /><path d="M2.500 12.300L14 5.800q1-.8 2.500-.5a3.900 3.900 0 0 1 0 7.700H4z" fill="#fff" /></svg>
        <svg viewBox="0 0 20 14" className="ml-[10px] h-[14px] w-[20px]" fill="none" stroke="#fff" strokeWidth="1.200"><path d="M7 2.600h11v10H4V8M19.400 6v3M1.500 0v3M4.500 0v3M.5 3h5v2q-.5 2-2.500 2T.5 5z" /><path d="M6 4.500h7v6H6z" fill="#fff" stroke="none" /></svg>
        <svg viewBox="0 0 16 16" className="ml-[13px] h-[15px] w-[16px]" fill="none" stroke="#fff" strokeWidth="1.200"><path d="M.6 16A15 15 0 0 1 15.600 1M4.600 16A11 11 0 0 1 15.600 5M8.600 16a7 7 0 0 1 7-7" /><circle cx="14" cy="14.200" r="1.500" fill="#fff" stroke="none" /></svg>
        <svg viewBox="0 0 21 18" className="ml-[11px] h-[18px] w-[21px]" fill="none" stroke="#fff" strokeWidth="1.200"><path d="M.6 6h3l4-4v14l-4-4h-3zM10.500 6q2 3 0 6M13.500 3.500q4 5.500 0 11M16.500 1q6 8 0 16" /></svg>
        <span className="ml-[12px] text-[15px] tracking-[-0.5px]">ENG</span>
        <div className="ml-[19px] flex w-[62px] flex-col items-center text-[15px] leading-[23px] tracking-[-0.45px] whitespace-nowrap"><span>1:24 PM</span><span>5/1/2020</span></div>
        <div className="relative mr-[25px] ml-[26px]">
          <svg viewBox="0 0 20 20" className="h-5 w-5"><path d="M0 0h20v16H12l-3 4-2-4H0z" fill="#fff" /><path d="M4 4.500h12M4 8h12M4 11.500h8" stroke="#222" strokeWidth="1.300" /></svg>
          <div className="absolute top-[9px] left-[9px] flex h-[21px] w-[21px] items-center justify-center rounded-full border border-[#8d8d8d] bg-[#2b2a2b] text-[13px] font-semibold italic">7</div>
        </div>
        <div className="mr-[5px] h-[50px] w-px bg-[#77767a]" />
      </div>
    </div>
  );
}

export default function App() {
  return (
    <div className="flex h-[1080px] w-[1920px] flex-col overflow-hidden bg-white font-['Open_Sans','Noto_Sans',sans-serif]">
      <TabStrip />
      <AddressBar />
      <Bookmarks />
      <div className="flex flex-1">
        <SideRail />
        <AtlasPage />
      </div>
      <Taskbar />
    </div>
  );
}
